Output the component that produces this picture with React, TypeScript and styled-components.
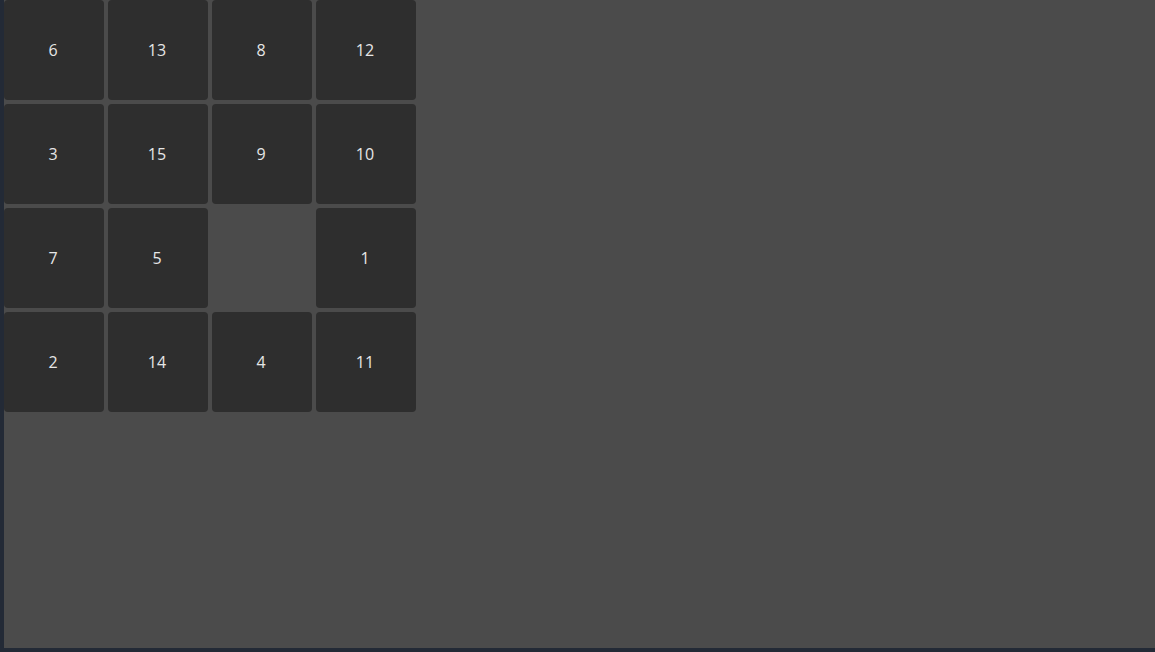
import React from "react";
import styled, { createGlobalStyle } from "styled-components";

const Global = createGlobalStyle`
  html, body { margin: 0; padding: 0; background: #232a36; }
  body { font-family: "Open Sans", "Noto Sans", sans-serif; }
`;

const Stage = styled.div`
  margin-left: 4px;
  height: 648px;
  background: #4b4b4b;
`;

const Board = styled.div`
  display: grid;
  grid-template-columns: repeat(4, 100px);
  grid-auto-rows: 100px;
  gap: 4px;
`;

const Tile = styled.div<{ $empty?: boolean }>`
  display: flex;
  align-items: center;
  justify-content: center;
  padding-right: 2px;
  border-radius: 4px;
  background: ${(p) => (p.$empty ? "transparent" : "#2e2e2e")};
  color: #e6e6e6;
  font-size: 16px;
`;

const tiles = [6, 13, 8, 12, 3, 15, 9, 10, 7, 5, 0, 1, 2, 14, 4, 11];

export default function App() {
  return (
    <>
      <Global />
      <Stage>
        <Board>
          {tiles.map((n, i) => (
            <Tile key={i} $empty={n === 0}>
              {n === 0 ? "" : n}
            </Tile>
          ))}
        </Board>
      </Stage>
    </>
  );
}
